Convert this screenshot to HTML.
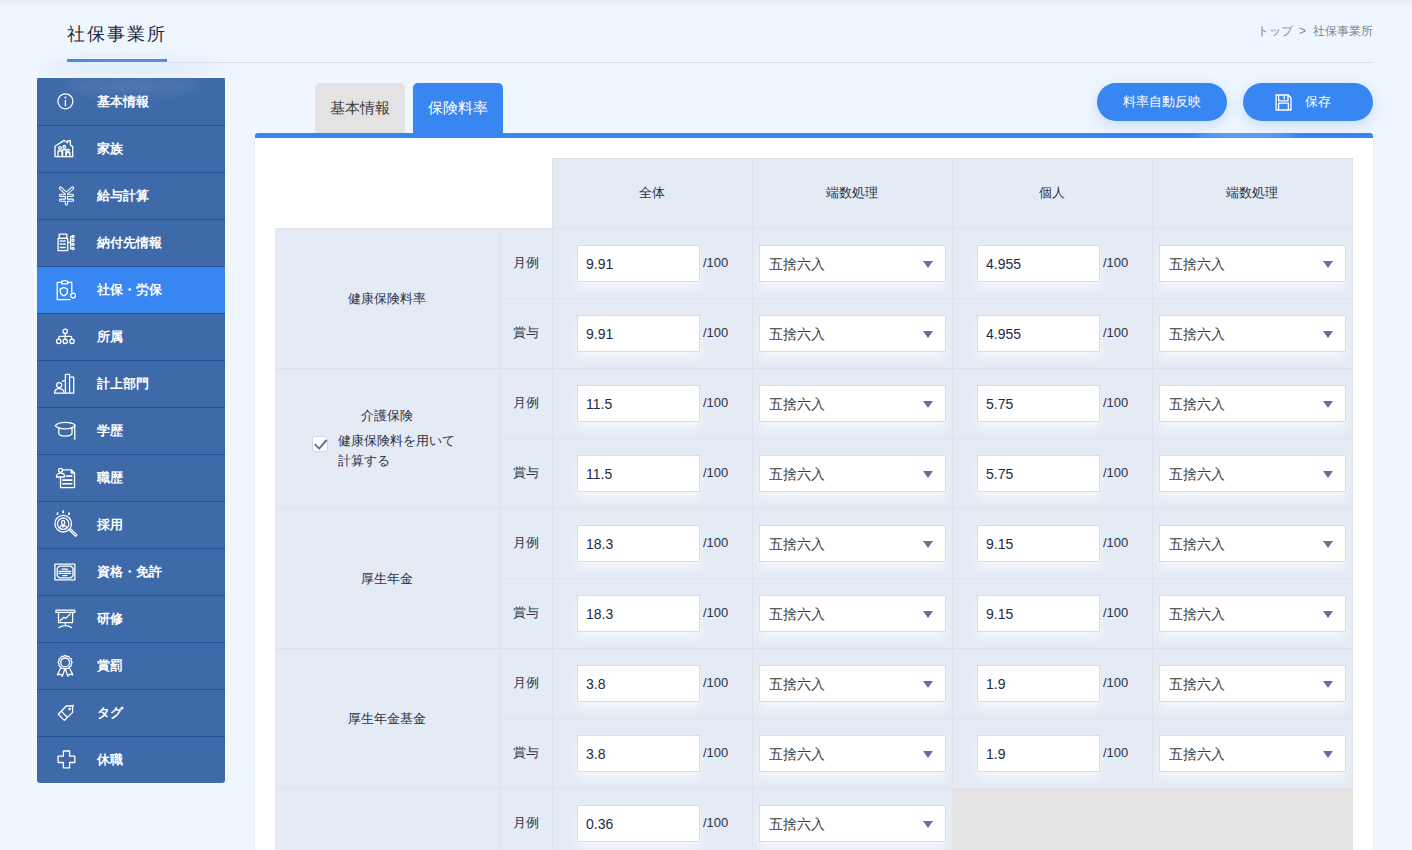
<!DOCTYPE html><html><head><meta charset="utf-8"><style>
*{box-sizing:border-box;margin:0;padding:0}
html,body{width:1412px;height:850px;overflow:hidden}
body{background:#eff6fe;font-family:"Liberation Sans", sans-serif;color:#2b3245;position:relative}
.a{position:absolute}
.topsh{left:0;top:0;width:1412px;height:7px;background:linear-gradient(#e3eaf3,#eff6fd)}
.title{left:67px;top:22px;font-size:18px;line-height:24px;letter-spacing:2px;color:#1f2940;white-space:nowrap}
.uline{left:67px;top:59px;width:100px;height:3px;background:#3a82e4}
.gline{left:167px;top:62px;width:1206px;height:1px;background:#dbe1ea}
.crumb{left:1200px;width:173px;top:23px;font-size:12px;line-height:16px;color:#80868f;text-align:right;white-space:nowrap}
.side{left:37px;top:78px;width:188px;height:705px;background:#3e6aa9;border-radius:3px;box-shadow:0 0 8px rgba(255,255,255,.8)}
.tglow{left:40px;top:58px;width:180px;height:26px;border-radius:50%;background:rgba(190,210,240,.25);filter:blur(8px)}
.shine{left:25px;top:0;width:140px;height:16px;border-radius:50%;background:rgba(255,255,255,.09);filter:blur(6px)}
.si{left:0;width:188px;height:47px;border-top:1px solid #24529a;color:#fff;font-size:13px;font-weight:bold}
.si.act{background:#3786f2}
.si span{position:absolute;left:60px;top:15px;line-height:16px;white-space:nowrap}
.si svg{position:absolute;left:17px;top:12px;width:22px;height:22px}
.tab{top:83px;height:50px;width:90px;border-radius:5px 5px 0 0;font-size:15px;line-height:18px;text-align:center;padding-top:16px}
.tab1{left:315px;background:#e3e3e3;color:#3a3a3a}
.tab2{left:413px;background:#3786f2;color:#fff}
.bar{left:255px;top:133px;width:1118px;height:5px;background:#3786f2;border-radius:3px 3px 0 0}
.panel{left:255px;top:138px;width:1118px;height:720px;background:#fff;box-shadow:0 0 2px rgba(120,130,150,.12)}
.btn{top:83px;height:38px;width:130px;border-radius:19px;background:#3786f2;color:#fff;font-size:13px;line-height:16px;box-shadow:0 4px 14px rgba(55,134,242,.22)}
.btn span{position:absolute;top:11px;white-space:nowrap}
.c{background:#e4ebf5;border-left:1px solid #dce3ec;border-top:1px solid #dce3ec}
.c.r{border-right:1px solid #dce3ec}
.ct{font-size:13px;line-height:16px;color:#2b3245;white-space:nowrap;text-align:center}
.inp{width:123px;height:37px;background:#fff;border:1px solid #dcdcdc;box-shadow:0 6px 8px rgba(255,255,255,.6);font-size:14px;line-height:16px;color:#1f2940;padding:10px 0 0 8px}
.sel{width:187px;height:37px;background:#fff;border:1px solid #dcdcdc;box-shadow:0 6px 8px rgba(255,255,255,.6);font-size:14px;line-height:16px;color:#3a3a3a;padding:10px 0 0 9px}
.tri{width:0;height:0;border-left:5px solid transparent;border-right:5px solid transparent;border-top:7px solid #65709c}
.per{font-size:13px;line-height:14px;color:#2b3245}
.gray{background:#e3e3e3}
</style></head><body><div class="a topsh"></div><div class="a title">社保事業所</div><div class="a uline"></div><div class="a gline"></div><div class="a crumb">トップ<span style="margin:0 7px 0 6px">&gt;</span>社保事業所</div><div class="a tglow"></div><div class="a side"><div class="a si" style="top:0px;border-top-color:#3e6aa9;"><svg viewBox="0 0 22 22"><g stroke="#fff" fill="none" stroke-width="1.3" stroke-linecap="round" stroke-linejoin="round" stroke-width="1.6"><circle cx="11.4" cy="10.3" r="7.5"/><line x1="11.4" y1="9.5" x2="11.4" y2="14.8"/></g><circle cx="11.4" cy="6.6" r="1" fill="#fff"/></svg><span>基本情報</span></div><div class="a si" style="top:47px;"><svg viewBox="0 0 22 22"><g stroke="#fff" fill="none" stroke-width="1.3" stroke-linecap="round" stroke-linejoin="round"><path d="M1 18.7 V8.2 L10.1 2.4 L13.7 4.7 V2.6 H16.3 V7 L18.7 8.6 V18.7 Z"/><circle cx="6" cy="10" r="1.4"/><path d="M4 18.7 V13 H8 V18.7"/><circle cx="10.3" cy="8.8" r="1.3"/><path d="M8.6 18.7 V11.5 H12 V18.7"/><circle cx="14" cy="12.4" r="1.2"/><path d="M12.2 18.7 V14.5 H15.8 V18.7"/></g></svg><span>家族</span></div><div class="a si" style="top:94px;"><svg viewBox="0 0 22 22"><path d="M6.4 3 L12.4 8.5 L18.6 3 M12.4 8.5 V19 M6.5 10.3 H18.5 M6.5 15.2 H18.5" stroke="#fff" stroke-width="3.2" fill="none" stroke-linecap="round" stroke-linejoin="round"/><path d="M6.4 3 L12.4 8.5 L18.6 3 M12.4 8.5 V19 M6.5 10.3 H18.5 M6.5 15.2 H18.5" stroke="#3e6aa9" stroke-width="1.1" fill="none" stroke-linecap="round" stroke-linejoin="round"/></svg><span>給与計算</span></div><div class="a si" style="top:141px;"><svg viewBox="0 0 22 22"><g stroke="#fff" fill="none" stroke-width="1.3" stroke-linecap="round" stroke-linejoin="round"><rect x="5.2" y="2.2" width="7.6" height="4.1"/><rect x="4.1" y="6.3" width="9.6" height="12.4"/><path d="M6.3 9h1.8M9.5 9h1.8M6.3 12h1.8M9.5 12h1.8M6.3 15.5h5 M13.7 10.4 H16.7 M16.7 4.5 V17"/><circle cx="19" cy="4.4" r="1.1"/><circle cx="19" cy="8.2" r="1.1"/><circle cx="19" cy="12.3" r="1.1"/><circle cx="19" cy="16.5" r="1.1"/></g></svg><span>納付先情報</span></div><div class="a si act" style="top:188px;"><svg viewBox="0 0 22 22"><g stroke="#fff" fill="none" stroke-width="1.3" stroke-linecap="round" stroke-linejoin="round"><path d="M7.7 3.3 H3.2 V20.6 H16 M13.7 3.3 H17.8 V13"/><path d="M7.7 4.8 V2.8 C7.7 1.2 13.7 1.2 13.7 2.8 V4.8 Z"/><path d="M9.9 8.4 L13.4 10.2 V12.8 C13.4 15 11.6 16.2 9.9 16.8 C8.2 16.2 6.3 15 6.3 12.8 V10.2 Z"/><circle cx="19.1" cy="16.6" r="2.4"/></g></svg><span>社保・労保</span></div><div class="a si" style="top:235px;"><svg viewBox="0 0 22 22"><g stroke="#fff" fill="none" stroke-width="1.3" stroke-linecap="round" stroke-linejoin="round" stroke-width="1.4"><circle cx="11.2" cy="5.3" r="2.2"/><path d="M11.2 7.5 V13 M4.7 13 V11.6 Q4.7 10.4 6 10.4 H16.4 Q17.7 10.4 17.7 11.6 V13"/><circle cx="4.7" cy="15.3" r="2.2"/><circle cx="11.2" cy="15.3" r="2.2"/><circle cx="18" cy="15.3" r="2.2"/></g></svg><span>所属</span></div><div class="a si" style="top:282px;"><svg viewBox="0 0 22 22"><g stroke="#fff" fill="none" stroke-width="1.3" stroke-linecap="round" stroke-linejoin="round" stroke-width="1.4"><path d="M11.4 20.2 V1.4 H15.6 V20.2 M15.6 4.2 H19.7 V20.2 H0.5"/><circle cx="5.2" cy="12.1" r="2.5"/><path d="M0.6 20 C0.6 17.3 2.6 15.6 5.2 15.6 C7.8 15.6 9.6 17 10 19.5 M8.4 8.2 C9 7.7 10 7.6 11.3 7.7"/></g></svg><span>計上部門</span></div><div class="a si" style="top:329px;"><svg viewBox="0 0 22 22"><g stroke="#fff" fill="none" stroke-width="1.3" stroke-linecap="round" stroke-linejoin="round" stroke-width="1.5"><path d="M1.3 5.7 C3 3.3 7 2.3 11.2 2.3 C15.5 2.3 19.5 3.1 21.2 5.1 C19.8 7.8 15.5 8.8 11.2 8.8 C7 8.8 2.8 8 1.3 5.7 Z"/><path d="M4.8 7.7 V13.3 C4.8 15.5 7 16.1 11.2 16.1 C15.4 16.1 18 15.5 18 13.3 V7.6 M20.7 6 V17"/></g><path d="M20.7 16.8 L21.8 19 Q20.7 20 19.6 19 Z" fill="#fff"/></svg><span>学歴</span></div><div class="a si" style="top:376px;"><svg viewBox="0 0 22 22"><g stroke="#fff" fill="none" stroke-width="1.3" stroke-linecap="round" stroke-linejoin="round" stroke-width="1.4"><circle cx="6.5" cy="3.3" r="2"/><path d="M2.4 10 C2.4 7.5 4 6.2 6.5 6.2 C9 6.2 10.7 7.5 10.7 10 Z M6.5 10 V20.6 H20.5 V6 L17.3 2.9 H8.5 M17.3 2.9 V6 H20.5"/><path d="M12.6 9.1 H17.8 M8.8 13.1 H17.8 M8.8 16.8 H17.8" stroke-width="1.6"/></g></svg><span>職歴</span></div><div class="a si" style="top:423px;"><svg viewBox="0 0 22 22" style="overflow:visible"><g stroke="#fff" fill="none" stroke-width="1.3" stroke-linecap="round" stroke-linejoin="round" stroke-width="1.4"><circle cx="9.2" cy="9.7" r="8.3"/><circle cx="9.2" cy="9.7" r="5.7"/><path d="M9.1 6.3 C7.9 6.3 7.6 7.3 7.6 8.4 C7.6 9.8 8.3 10.9 9.1 10.9 C9.9 10.9 10.6 9.8 10.6 8.4 C10.6 7.3 10.3 6.3 9.1 6.3 Z M5.6 13.6 C6.4 12 7.4 11.6 8.3 11.6 L9.1 13 L9.9 11.6 C10.8 11.6 11.8 12 12.6 13.6"/><path d="M15.4 16.3 L21.5 22.2 L22.9 20.9 L16.8 15" /><path d="M3.5 -0.8 V0.2 M9.2 -2.8 V-1.6 M15 -0.8 V0.2" stroke-width="1.8"/></g></svg><span>採用</span></div><div class="a si" style="top:470px;"><svg viewBox="0 0 22 22"><g stroke="#fff" fill="none" stroke-width="1.3" stroke-linecap="round" stroke-linejoin="round" stroke-width="1.4"><rect x="0.9" y="3.1" width="19.9" height="15.8"/><path d="M5.2 5.2 H17 L19 7.2 V14.8 L17 16.8 H5.2 L3.2 14.8 V7.2 Z"/><path d="M8 8.2 H13.7 M5 10.4 H16.7 M5 12.3 H16.7 M8.8 14.6 H12.9" stroke-width="1.2"/></g></svg><span>資格・免許</span></div><div class="a si" style="top:517px;"><svg viewBox="0 0 22 22"><g stroke="#fff" fill="none" stroke-width="1.3" stroke-linecap="round" stroke-linejoin="round" stroke-width="1.5"><rect x="2" y="2.2" width="18.8" height="2.2"/><path d="M4.5 4.4 V14.6 H18.6 V4.4 M11.4 14.6 V17.6 M5 19.5 C7 18 9.5 17.6 11.4 17.6 C13.3 17.6 15.5 18 17.5 19.5 M6.2 12.7 L9.9 9.3 L11.8 10.4 L16.3 5.9"/></g></svg><span>研修</span></div><div class="a si" style="top:564px;"><svg viewBox="0 0 22 22"><g stroke="#fff" fill="none" stroke-width="1.3" stroke-linecap="round" stroke-linejoin="round" stroke-width="1.3"><path d="M11.10 0.40 L12.70 1.41 L14.60 1.34 L15.48 3.02 L17.16 3.90 L17.09 5.80 L18.10 7.40 L17.09 9.00 L17.16 10.90 L15.48 11.78 L14.60 13.46 L12.70 13.39 L11.10 14.40 L9.50 13.39 L7.60 13.46 L6.72 11.78 L5.04 10.90 L5.11 9.00 L4.10 7.40 L5.11 5.80 L5.04 3.90 L6.72 3.02 L7.60 1.34 L9.50 1.41 Z"/><circle cx="11.1" cy="7.4" r="4.4"/><path d="M6.8 12.8 L3.4 19.8 L6.5 19.2 L8.4 21 L10.6 14.6 M15.4 12.8 L18.8 19.8 L15.7 19.2 L13.8 21 L11.6 14.6"/></g></svg><span>賞罰</span></div><div class="a si" style="top:611px;"><svg viewBox="0 0 22 22"><g stroke="#fff" fill="none" stroke-width="1.3" stroke-linecap="round" stroke-linejoin="round" stroke-width="1.5"><path d="M12.2 4 H18.6 V10.4 L10.3 18.4 L4.3 12.3 Z M7.7 9.6 L13 15 M18.6 4.2 L19.4 3.3"/></g><circle cx="15.6" cy="7" r="1.3" fill="#fff"/></svg><span>タグ</span></div><div class="a si" style="top:658px;"><svg viewBox="0 0 22 22"><g stroke="#fff" fill="none" stroke-width="1.3" stroke-linecap="round" stroke-linejoin="round" stroke-width="1.5" stroke-linejoin="miter"><path d="M9.4 2 H15.6 V7.2 H20.8 V13.5 H15.6 V18.9 H9.4 V13.5 H4.1 V7.2 H9.4 Z"/></g></svg><span>休職</span></div><div class="a shine"></div></div><div class="a tab tab1">基本情報</div><div class="a tab tab2">保険料率</div><div class="a panel"></div><div class="a bar"></div><div class="a" style="left:1195px;top:131px;width:100px;height:9px;border-radius:50%;background:rgba(255,255,255,.3);filter:blur(5px)"></div><div class="a btn" style="left:1097px"><span style="left:26px">料率自動反映</span></div><div class="a btn" style="left:1243px"><svg class="a" style="left:32px;top:11px" width="17" height="17" viewBox="0 0 17 17"><g stroke="#fff" fill="none" stroke-width="1.3" stroke-linecap="round" stroke-linejoin="round" stroke-width="1.4"><path d="M1.1 1 H13.3 L16 3.7 V16 H1.1 Z M3.6 1 V6.8 H13 V1 M9.3 2.3 V4.8 M3.6 16 V9.2 H13.4 V16"/></g></svg><span style="left:62px">保存</span></div><div class="a c" style="left:552px;top:158px;width:200px;height:70px"></div><div class="a ct" style="left:552px;top:185px;width:200px">全体</div><div class="a c" style="left:752px;top:158px;width:200px;height:70px"></div><div class="a ct" style="left:752px;top:185px;width:200px">端数処理</div><div class="a c" style="left:952px;top:158px;width:200px;height:70px"></div><div class="a ct" style="left:952px;top:185px;width:200px">個人</div><div class="a c r" style="left:1152px;top:158px;width:201px;height:70px"></div><div class="a ct" style="left:1152px;top:185px;width:200px">端数処理</div><div class="a c" style="left:275px;top:228px;width:224px;height:140px;border-left:0"></div><div class="a ct" style="left:275px;top:291px;width:224px">健康保険料率</div><div class="a c" style="left:499px;top:228px;width:53px;height:70px"></div><div class="a ct" style="left:499px;top:255px;width:53px">月例</div><div class="a c" style="left:552px;top:228px;width:200px;height:70px"></div><div class="a inp" style="left:577px;top:245px">9.91</div><div class="a per" style="left:703px;top:256px">/100</div><div class="a c" style="left:752px;top:228px;width:200px;height:70px"></div><div class="a sel" style="left:759px;top:245px">五捨六入<div class="a tri" style="left:163px;top:15px"></div></div><div class="a c" style="left:952px;top:228px;width:200px;height:70px"></div><div class="a inp" style="left:977px;top:245px">4.955</div><div class="a per" style="left:1103px;top:256px">/100</div><div class="a c r" style="left:1152px;top:228px;width:201px;height:70px"></div><div class="a sel" style="left:1159px;top:245px">五捨六入<div class="a tri" style="left:163px;top:15px"></div></div><div class="a c" style="left:499px;top:298px;width:53px;height:70px"></div><div class="a ct" style="left:499px;top:325px;width:53px">賞与</div><div class="a c" style="left:552px;top:298px;width:200px;height:70px"></div><div class="a inp" style="left:577px;top:315px">9.91</div><div class="a per" style="left:703px;top:326px">/100</div><div class="a c" style="left:752px;top:298px;width:200px;height:70px"></div><div class="a sel" style="left:759px;top:315px">五捨六入<div class="a tri" style="left:163px;top:15px"></div></div><div class="a c" style="left:952px;top:298px;width:200px;height:70px"></div><div class="a inp" style="left:977px;top:315px">4.955</div><div class="a per" style="left:1103px;top:326px">/100</div><div class="a c r" style="left:1152px;top:298px;width:201px;height:70px"></div><div class="a sel" style="left:1159px;top:315px">五捨六入<div class="a tri" style="left:163px;top:15px"></div></div><div class="a c" style="left:275px;top:368px;width:224px;height:140px;border-left:0"></div><div class="a ct" style="left:275px;top:408px;width:224px">介護保険</div><div class="a" style="left:312px;top:436px;width:16px;height:16px;background:#fff;border:1px solid #cfd6e0;border-radius:2px"><svg width="15" height="15" viewBox="0 0 15 15" style="position:absolute;left:0;top:0;overflow:visible"><path d="M1.8 7.2 L6.2 11.6 L13.6 3" stroke="#64759a" stroke-width="2" fill="none"/></svg></div><div class="a" style="left:338px;top:431px;font-size:13px;line-height:20px;color:#2b3245;width:140px">健康保険料を用いて<br>計算する</div><div class="a c" style="left:499px;top:368px;width:53px;height:70px"></div><div class="a ct" style="left:499px;top:395px;width:53px">月例</div><div class="a c" style="left:552px;top:368px;width:200px;height:70px"></div><div class="a inp" style="left:577px;top:385px">11.5</div><div class="a per" style="left:703px;top:396px">/100</div><div class="a c" style="left:752px;top:368px;width:200px;height:70px"></div><div class="a sel" style="left:759px;top:385px">五捨六入<div class="a tri" style="left:163px;top:15px"></div></div><div class="a c" style="left:952px;top:368px;width:200px;height:70px"></div><div class="a inp" style="left:977px;top:385px">5.75</div><div class="a per" style="left:1103px;top:396px">/100</div><div class="a c r" style="left:1152px;top:368px;width:201px;height:70px"></div><div class="a sel" style="left:1159px;top:385px">五捨六入<div class="a tri" style="left:163px;top:15px"></div></div><div class="a c" style="left:499px;top:438px;width:53px;height:70px"></div><div class="a ct" style="left:499px;top:465px;width:53px">賞与</div><div class="a c" style="left:552px;top:438px;width:200px;height:70px"></div><div class="a inp" style="left:577px;top:455px">11.5</div><div class="a per" style="left:703px;top:466px">/100</div><div class="a c" style="left:752px;top:438px;width:200px;height:70px"></div><div class="a sel" style="left:759px;top:455px">五捨六入<div class="a tri" style="left:163px;top:15px"></div></div><div class="a c" style="left:952px;top:438px;width:200px;height:70px"></div><div class="a inp" style="left:977px;top:455px">5.75</div><div class="a per" style="left:1103px;top:466px">/100</div><div class="a c r" style="left:1152px;top:438px;width:201px;height:70px"></div><div class="a sel" style="left:1159px;top:455px">五捨六入<div class="a tri" style="left:163px;top:15px"></div></div><div class="a c" style="left:275px;top:508px;width:224px;height:140px;border-left:0"></div><div class="a ct" style="left:275px;top:571px;width:224px">厚生年金</div><div class="a c" style="left:499px;top:508px;width:53px;height:70px"></div><div class="a ct" style="left:499px;top:535px;width:53px">月例</div><div class="a c" style="left:552px;top:508px;width:200px;height:70px"></div><div class="a inp" style="left:577px;top:525px">18.3</div><div class="a per" style="left:703px;top:536px">/100</div><div class="a c" style="left:752px;top:508px;width:200px;height:70px"></div><div class="a sel" style="left:759px;top:525px">五捨六入<div class="a tri" style="left:163px;top:15px"></div></div><div class="a c" style="left:952px;top:508px;width:200px;height:70px"></div><div class="a inp" style="left:977px;top:525px">9.15</div><div class="a per" style="left:1103px;top:536px">/100</div><div class="a c r" style="left:1152px;top:508px;width:201px;height:70px"></div><div class="a sel" style="left:1159px;top:525px">五捨六入<div class="a tri" style="left:163px;top:15px"></div></div><div class="a c" style="left:499px;top:578px;width:53px;height:70px"></div><div class="a ct" style="left:499px;top:605px;width:53px">賞与</div><div class="a c" style="left:552px;top:578px;width:200px;height:70px"></div><div class="a inp" style="left:577px;top:595px">18.3</div><div class="a per" style="left:703px;top:606px">/100</div><div class="a c" style="left:752px;top:578px;width:200px;height:70px"></div><div class="a sel" style="left:759px;top:595px">五捨六入<div class="a tri" style="left:163px;top:15px"></div></div><div class="a c" style="left:952px;top:578px;width:200px;height:70px"></div><div class="a inp" style="left:977px;top:595px">9.15</div><div class="a per" style="left:1103px;top:606px">/100</div><div class="a c r" style="left:1152px;top:578px;width:201px;height:70px"></div><div class="a sel" style="left:1159px;top:595px">五捨六入<div class="a tri" style="left:163px;top:15px"></div></div><div class="a c" style="left:275px;top:648px;width:224px;height:140px;border-left:0"></div><div class="a ct" style="left:275px;top:711px;width:224px">厚生年金基金</div><div class="a c" style="left:499px;top:648px;width:53px;height:70px"></div><div class="a ct" style="left:499px;top:675px;width:53px">月例</div><div class="a c" style="left:552px;top:648px;width:200px;height:70px"></div><div class="a inp" style="left:577px;top:665px">3.8</div><div class="a per" style="left:703px;top:676px">/100</div><div class="a c" style="left:752px;top:648px;width:200px;height:70px"></div><div class="a sel" style="left:759px;top:665px">五捨六入<div class="a tri" style="left:163px;top:15px"></div></div><div class="a c" style="left:952px;top:648px;width:200px;height:70px"></div><div class="a inp" style="left:977px;top:665px">1.9</div><div class="a per" style="left:1103px;top:676px">/100</div><div class="a c r" style="left:1152px;top:648px;width:201px;height:70px"></div><div class="a sel" style="left:1159px;top:665px">五捨六入<div class="a tri" style="left:163px;top:15px"></div></div><div class="a c" style="left:499px;top:718px;width:53px;height:70px"></div><div class="a ct" style="left:499px;top:745px;width:53px">賞与</div><div class="a c" style="left:552px;top:718px;width:200px;height:70px"></div><div class="a inp" style="left:577px;top:735px">3.8</div><div class="a per" style="left:703px;top:746px">/100</div><div class="a c" style="left:752px;top:718px;width:200px;height:70px"></div><div class="a sel" style="left:759px;top:735px">五捨六入<div class="a tri" style="left:163px;top:15px"></div></div><div class="a c" style="left:952px;top:718px;width:200px;height:70px"></div><div class="a inp" style="left:977px;top:735px">1.9</div><div class="a per" style="left:1103px;top:746px">/100</div><div class="a c r" style="left:1152px;top:718px;width:201px;height:70px"></div><div class="a sel" style="left:1159px;top:735px">五捨六入<div class="a tri" style="left:163px;top:15px"></div></div><div class="a c" style="left:275px;top:788px;width:224px;height:140px;border-left:0"></div><div class="a c" style="left:499px;top:788px;width:53px;height:70px"></div><div class="a ct" style="left:499px;top:815px;width:53px">月例</div><div class="a c" style="left:552px;top:788px;width:200px;height:70px"></div><div class="a inp" style="left:577px;top:805px">0.36</div><div class="a per" style="left:703px;top:816px">/100</div><div class="a c" style="left:752px;top:788px;width:200px;height:70px"></div><div class="a sel" style="left:759px;top:805px">五捨六入<div class="a tri" style="left:163px;top:15px"></div></div><div class="a c" style="left:499px;top:858px;width:53px;height:70px"></div><div class="a c" style="left:552px;top:858px;width:200px;height:70px"></div><div class="a c" style="left:752px;top:858px;width:200px;height:70px"></div><div class="a gray" style="left:952px;top:788px;width:401px;height:140px"></div></body></html>
